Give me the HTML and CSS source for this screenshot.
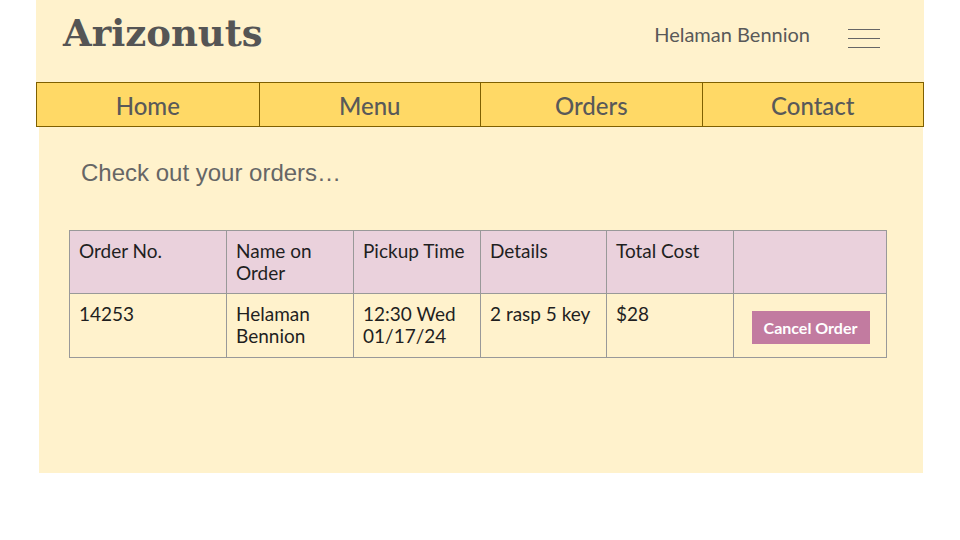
FILE: index.html
```html
<!DOCTYPE html>
<html lang="en">
<head>
<meta charset="utf-8">
<title>Arizonuts - Orders</title>
<link rel="stylesheet" href="styles.css">
</head>
<body>
<div class="page">
  <header class="topbar">
    <h1 class="brand">Arizonuts</h1>
    <div class="user">
      <span class="user-name">Helaman Bennion</span>
      <svg class="burger" width="32" height="20" viewBox="0 0 32 20" aria-hidden="true">
        <line x1="0" y1="0.5" x2="32" y2="0.5" />
        <line x1="0" y1="9.5" x2="32" y2="9.5" />
        <line x1="0" y1="18.5" x2="32" y2="18.5" />
      </svg>
    </div>
  </header>
  <nav class="nav">
    <a class="nav-item" href="#">Home</a>
    <a class="nav-item" href="#">Menu</a>
    <a class="nav-item" href="#">Orders</a>
    <a class="nav-item" href="#">Contact</a>
  </nav>
  <main class="main">
    <h2 class="lead">Check out your orders…</h2>
    <table class="orders">
      <colgroup>
        <col class="c1"><col class="c2"><col class="c3"><col class="c4"><col class="c5"><col class="c6">
      </colgroup>
      <thead>
        <tr>
          <th>Order No.</th>
          <th>Name on Order</th>
          <th>Pickup Time</th>
          <th>Details</th>
          <th>Total Cost</th>
          <th></th>
        </tr>
      </thead>
      <tbody>
        <tr>
          <td>14253</td>
          <td>Helaman Bennion</td>
          <td>12:30 Wed 01/17/24</td>
          <td>2 rasp 5 key</td>
          <td>$28</td>
          <td class="action"><button class="cancel">Cancel Order</button></td>
        </tr>
      </tbody>
    </table>
  </main>
</div>
</body>
</html>
```
FILE: styles.css
```css
html, body {
  margin: 0;
  padding: 0;
  background: #ffffff;
}
body {
  font-family: "Lato", "Open Sans", sans-serif;
  color: #1f1f1f;
}
.page {
  width: 888px;
  margin-left: 36px;
}
.topbar {
  height: 82px;
  background: #fff2cc;
  display: flex;
  align-items: center;
  justify-content: space-between;
  padding: 0 44px 0 27px;
  box-sizing: border-box;
}
.brand {
  margin: 0;
  font-family: "DejaVu Serif", "Liberation Serif", serif;
  font-weight: bold;
  font-size: 37px;
  color: #555555;
  line-height: 1;
  position: relative;
  top: -8px;
}
.user {
  display: flex;
  align-items: center;
  gap: 38px;
  position: relative;
  top: -7px;
}
.user-name {
  font-size: 20px;
  color: #595959;
}
.burger {
  display: block;
  stroke: #666666;
  stroke-width: 1;
  position: relative;
  top: 5px;
}
.nav {
  display: grid;
  grid-template-columns: repeat(4, 1fr);
  background: #ffd966;
  border: 1px solid #7f6000;
  height: 45px;
  box-sizing: border-box;
}
.nav-item {
  display: flex;
  align-items: center;
  justify-content: center;
  text-decoration: none;
  color: #595959;
  font-size: 24px;
  font-weight: 500;
  border-left: 1px solid #7f6000;
  padding-top: 2px;
}
.nav-item:first-child {
  border-left: none;
}
.main {
  background: #fff2cc;
  margin: 0 1px 0 3px;
  height: 346px;
  padding: 31px 0 0 30px;
  box-sizing: border-box;
}
.lead {
  margin: 0 0 42px 12px;
  font-family: "Liberation Sans", Arial, sans-serif;
  font-weight: normal;
  font-size: 24px;
  line-height: 30px;
  color: #666666;
}
.orders {
  border-collapse: collapse;
  table-layout: fixed;
  width: 817px;
  font-size: 19px;
  line-height: 22px;
}
.c1 { width: 157px; }
.c2 { width: 127px; }
.c3 { width: 127px; }
.c4 { width: 126px; }
.c5 { width: 127px; }
.c6 { width: 153px; }
.orders th,
.orders td {
  border: 1px solid #999999;
  text-align: left;
  vertical-align: top;
  padding: 9px 8px 9px 9px;
  font-weight: normal;
  color: #1f1f1f;
}
.orders thead th {
  background: #ead1dc;
  height: 44px;
}
.orders tbody td {
  height: 45px;
}
.orders td.action {
  text-align: center;
  vertical-align: middle;
  padding: 0;
}
.cancel {
  font-family: "Lato", "Open Sans", sans-serif;
  font-weight: bold;
  font-size: 16px;
  color: #ffffff;
  background: #c27ba0;
  border: none;
  width: 118px;
  height: 33px;
  padding: 0;
  margin-top: 4px;
  margin-left: 1px;
}
```
